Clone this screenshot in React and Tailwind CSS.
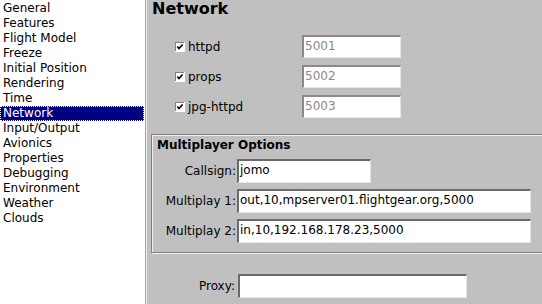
import React from "react";

const pages = [
  "General", "Features", "Flight Model", "Freeze", "Initial Position", "Rendering", "Time",
  "Network", "Input/Output", "Avionics", "Properties", "Debugging", "Environment", "Weather", "Clouds",
];

const ports = [
  { name: "httpd", port: "5001" },
  { name: "props", port: "5002" },
  { name: "jpg-httpd", port: "5003" },
];

function Check() {
  return (
    <svg viewBox="0 0 10 10" className="w-[10px] h-[10px] shrink-0">
      <rect x="0" y="0" width="10" height="10" fill="#ffffff" />
      <rect x="0" y="0" width="9" height="9" fill="#808080" />
      <rect x="1" y="1" width="8" height="8" fill="#ffffff" />
      <path d="M2.3 4.6 L4 6.6 L7.6 2.4" fill="none" stroke="#000" strokeWidth="1.6" />
    </svg>
  );
}

function Field({ value, dim, className = "" }) {
  return (
    <div
      className={`h-[23px] bg-white border-t-2 border-l-2 border-b border-r border-t-[#6a6a6a] border-l-[#6a6a6a] border-b-[#e6e6e6] border-r-[#e6e6e6] px-[1px] leading-[19px] text-[12px] whitespace-nowrap overflow-hidden ${dim ? "text-[#8a8a8a] border-t-[#8a8a8a] border-l-[#8a8a8a]" : "text-black"} ${className}`}
    >
      {value}
    </div>
  );
}

export default function App() {
  return (
    <div className="w-[542px] h-[304px] flex overflow-hidden bg-[#c0c0c0] text-black" style={{ fontFamily: "'DejaVu Sans', sans-serif" }}>
      <div className="w-[146px] shrink-0 bg-white border-r border-[#a8a8a8] pt-[1px]">
        {pages.map((p) => (
          <div
            key={p}
            className={`h-[15px] leading-[14px] text-[12px] pl-[3px] ${p === "Network" ? "bg-[#000080] text-white outline outline-1 outline-dotted outline-offset-[-1px] outline-white mr-[1px]" : ""}`}
          >
            {p}
          </div>
        ))}
      </div>
      <div className="flex-1 border-l border-[#ececec] pl-[4px] min-w-0">
        <div className="font-bold text-[16px] leading-[18px] pt-[0px] pl-[1px]">Network</div>
        <div className="mt-[17px] flex flex-col gap-[7px] pl-[24px]">
          {ports.map((r) => (
            <div key={r.name} className="flex items-center h-[23px]">
              <div className="w-[127px] flex items-center gap-[3px] text-[12px]">
                <Check />
                <span>{r.name}</span>
              </div>
              <Field value={r.port} dim className="w-[99px]" />
            </div>
          ))}
        </div>
        <div className="mt-[16px] w-[420px] border border-[#808080] shadow-[1px_1px_0_#f0f0f0,inset_1px_1px_0_#f0f0f0] pb-[9px]">
          <div className="font-bold text-[12px] leading-[16px] pl-[5px] pt-[2px]">Multiplayer Options</div>
          <div className="mt-[6px] flex flex-col gap-[6px]">
            {[
              ["Callsign:", "jomo", "w-[134px]"],
              ["Multiplay 1:", "out,10,mpserver01.flightgear.org,5000", "w-[294px]"],
              ["Multiplay 2:", "in,10,192.168.178.23,5000", "w-[294px]"],
            ].map(([l, v, w]) => (
              <div key={l} className="flex items-center">
                <div className="w-[85px] text-right text-[12px] pr-[1px]">{l}</div>
                <Field value={v} className={`${w} h-[24px]`} />
              </div>
            ))}
          </div>
        </div>
        <div className="mt-[21px] flex items-center">
          <div className="w-[87px] text-right text-[12px] pr-[3px]">Proxy:</div>
          <Field value="" className="w-[229px] h-[24px]" />
        </div>
      </div>
    </div>
  );
}
